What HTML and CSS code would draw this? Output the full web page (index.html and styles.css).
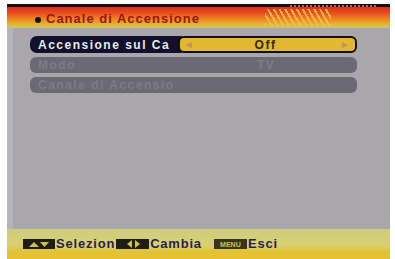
FILE: index.html
```html
<!DOCTYPE html>
<html>
<head>
<meta charset="utf-8">
<link rel="stylesheet" href="styles.css">
</head>
<body>
<div class="screen">
  <div class="topbar"><div class="dashes"></div></div>
  <div class="header">
    <span class="bullet"></span>
    <span class="title">Canale di Accensione</span>
    <span class="hatch"></span>
  </div>
  <div class="body">
    <div class="row active">
      <div class="label-pill">Accensione sul Ca</div>
      <div class="value-pill"><span class="arr">&#9664;</span><span class="val">Off</span><span class="arr">&#9654;</span></div>
    </div>
    <div class="row dim">
      <span class="dlabel">Modo</span><span class="dval">TV</span>
    </div>
    <div class="row dim">
      <span class="dlabel">Canale di Accensio</span><span class="dval"></span>
    </div>
  </div>
  <div class="footer">
    <span class="key k1"><svg width="24" height="8" viewBox="0 0 24 8"><polygon points="2,7 7,2 12,7" fill="#d8c040"/><polygon points="13,2 22,2 17.5,7" fill="#d8c040"/></svg></span>
    <span class="ftxt">Selezion</span>
    <span class="key k2"><svg width="24" height="8" viewBox="0 0 24 8"><polygon points="11,0 11,8 6,4" fill="#d8c040"/><polygon points="14,0 14,8 19,4" fill="#d8c040"/></svg></span>
    <span class="ftxt">Cambia</span>
    <span class="key k3"><span class="menu">MENU</span></span>
    <span class="ftxt">Esci</span>
  </div>
</div>
</body>
</html>
```
FILE: styles.css
```css
html, body {
  margin: 0;
  padding: 0;
  background: #ffffff;
}
.screen {
  margin-top: 4px;
  margin-left: 7px;
  width: 383px;
  height: 255px;
  display: flex;
  flex-direction: column;
  font-family: "Liberation Sans", Arial, sans-serif;
  font-weight: bold;
}
.topbar {
  height: 3px;
  background: #141010;
  display: flex;
  justify-content: flex-end;
  padding-right: 14px;
}
.dashes {
  width: 86px;
  height: 2px;
  margin-top: 1px;
  background: repeating-linear-gradient(90deg, #a07050 0 2px, transparent 2px 4px);
}
.header {
  height: 21px;
  background: linear-gradient(180deg, #d83020 0%, #e85020 30%, #f08a20 60%, #e0c040 90%, #c8c070 100%);
  display: flex;
  align-items: center;
  padding-left: 28px;
  position: relative;
}
.bullet {
  width: 6px;
  height: 6px;
  border-radius: 50%;
  background: #101010;
  margin-top: 5px;
  margin-right: 5px;
}
.title {
  color: #9a1410;
  font-size: 13px;
  letter-spacing: 1px;
  margin-top: 1px;
}
.hatch {
  position: absolute;
  left: 258px;
  top: 2px;
  width: 66px;
  height: 17px;
  background: repeating-linear-gradient(60deg, #f0c050 0 2px, transparent 2px 5px);
  opacity: 0.85;
}
.body {
  flex: 1;
  background: #a9a7ac;
  border-left: 6px solid #b6b4b8;
  padding-top: 8px;
  padding-left: 17px;
  display: flex;
  flex-direction: column;
  gap: 4px;
}
.row {
  width: 327px;
  height: 16px;
  display: flex;
  align-items: center;
  font-size: 12px;
  letter-spacing: 1.5px;
}
.active {
  height: 17px;
}
.label-pill {
  width: 152px;
  flex: none;
  height: 100%;
  background: #12102c;
  border-radius: 7px 0 0 7px;
  color: #e8ece8;
  padding-left: 8px;
  box-sizing: border-box;
  display: flex;
  align-items: center;
  white-space: nowrap;
  overflow: hidden;
}
.value-pill {
  flex: 1;
  height: 100%;
  margin-left: -4px;
  background: #e2b830;
  border: 2px solid #141008;
  border-radius: 6px;
  box-sizing: border-box;
  display: flex;
  align-items: center;
  justify-content: space-between;
  padding: 0 6px;
  color: #2c2810;
  position: relative;
}
.arr {
  font-size: 7px;
  color: #b89858;
}
.val {
  margin-right: 4px;
}
.dim {
  background: #6b6974;
  border-radius: 6px;
  color: #7d7b86;
  padding-left: 8px;
  box-sizing: border-box;
}
.dlabel {
  width: 219px;
  white-space: nowrap;
}
.dval {
  color: #7e7c86;
}
.footer {
  height: 30px;
  background: linear-gradient(180deg, #d0cc80 0%, #d8d070 55%, #e0c438 75%, #e8c030 100%);
  display: flex;
  align-items: flex-start;
  padding-top: 7px;
  padding-left: 16px;
  box-sizing: border-box;
  font-size: 13px;
  letter-spacing: 0.8px;
  color: #2a1e50;
}
.key {
  height: 10px;
  background: #1e1e14;
  display: flex;
  align-items: center;
  justify-content: center;
  margin-top: 3px;
}
.k1 { width: 32px; }
.k2 { width: 33px; margin-left: 1px; }
.k3 { width: 33px; margin-left: 12px; background: #383420; }
.menu {
  font-size: 7px;
  color: #d8c040;
  letter-spacing: 0;
}
.ftxt {
  margin-left: 1px;
}
```
